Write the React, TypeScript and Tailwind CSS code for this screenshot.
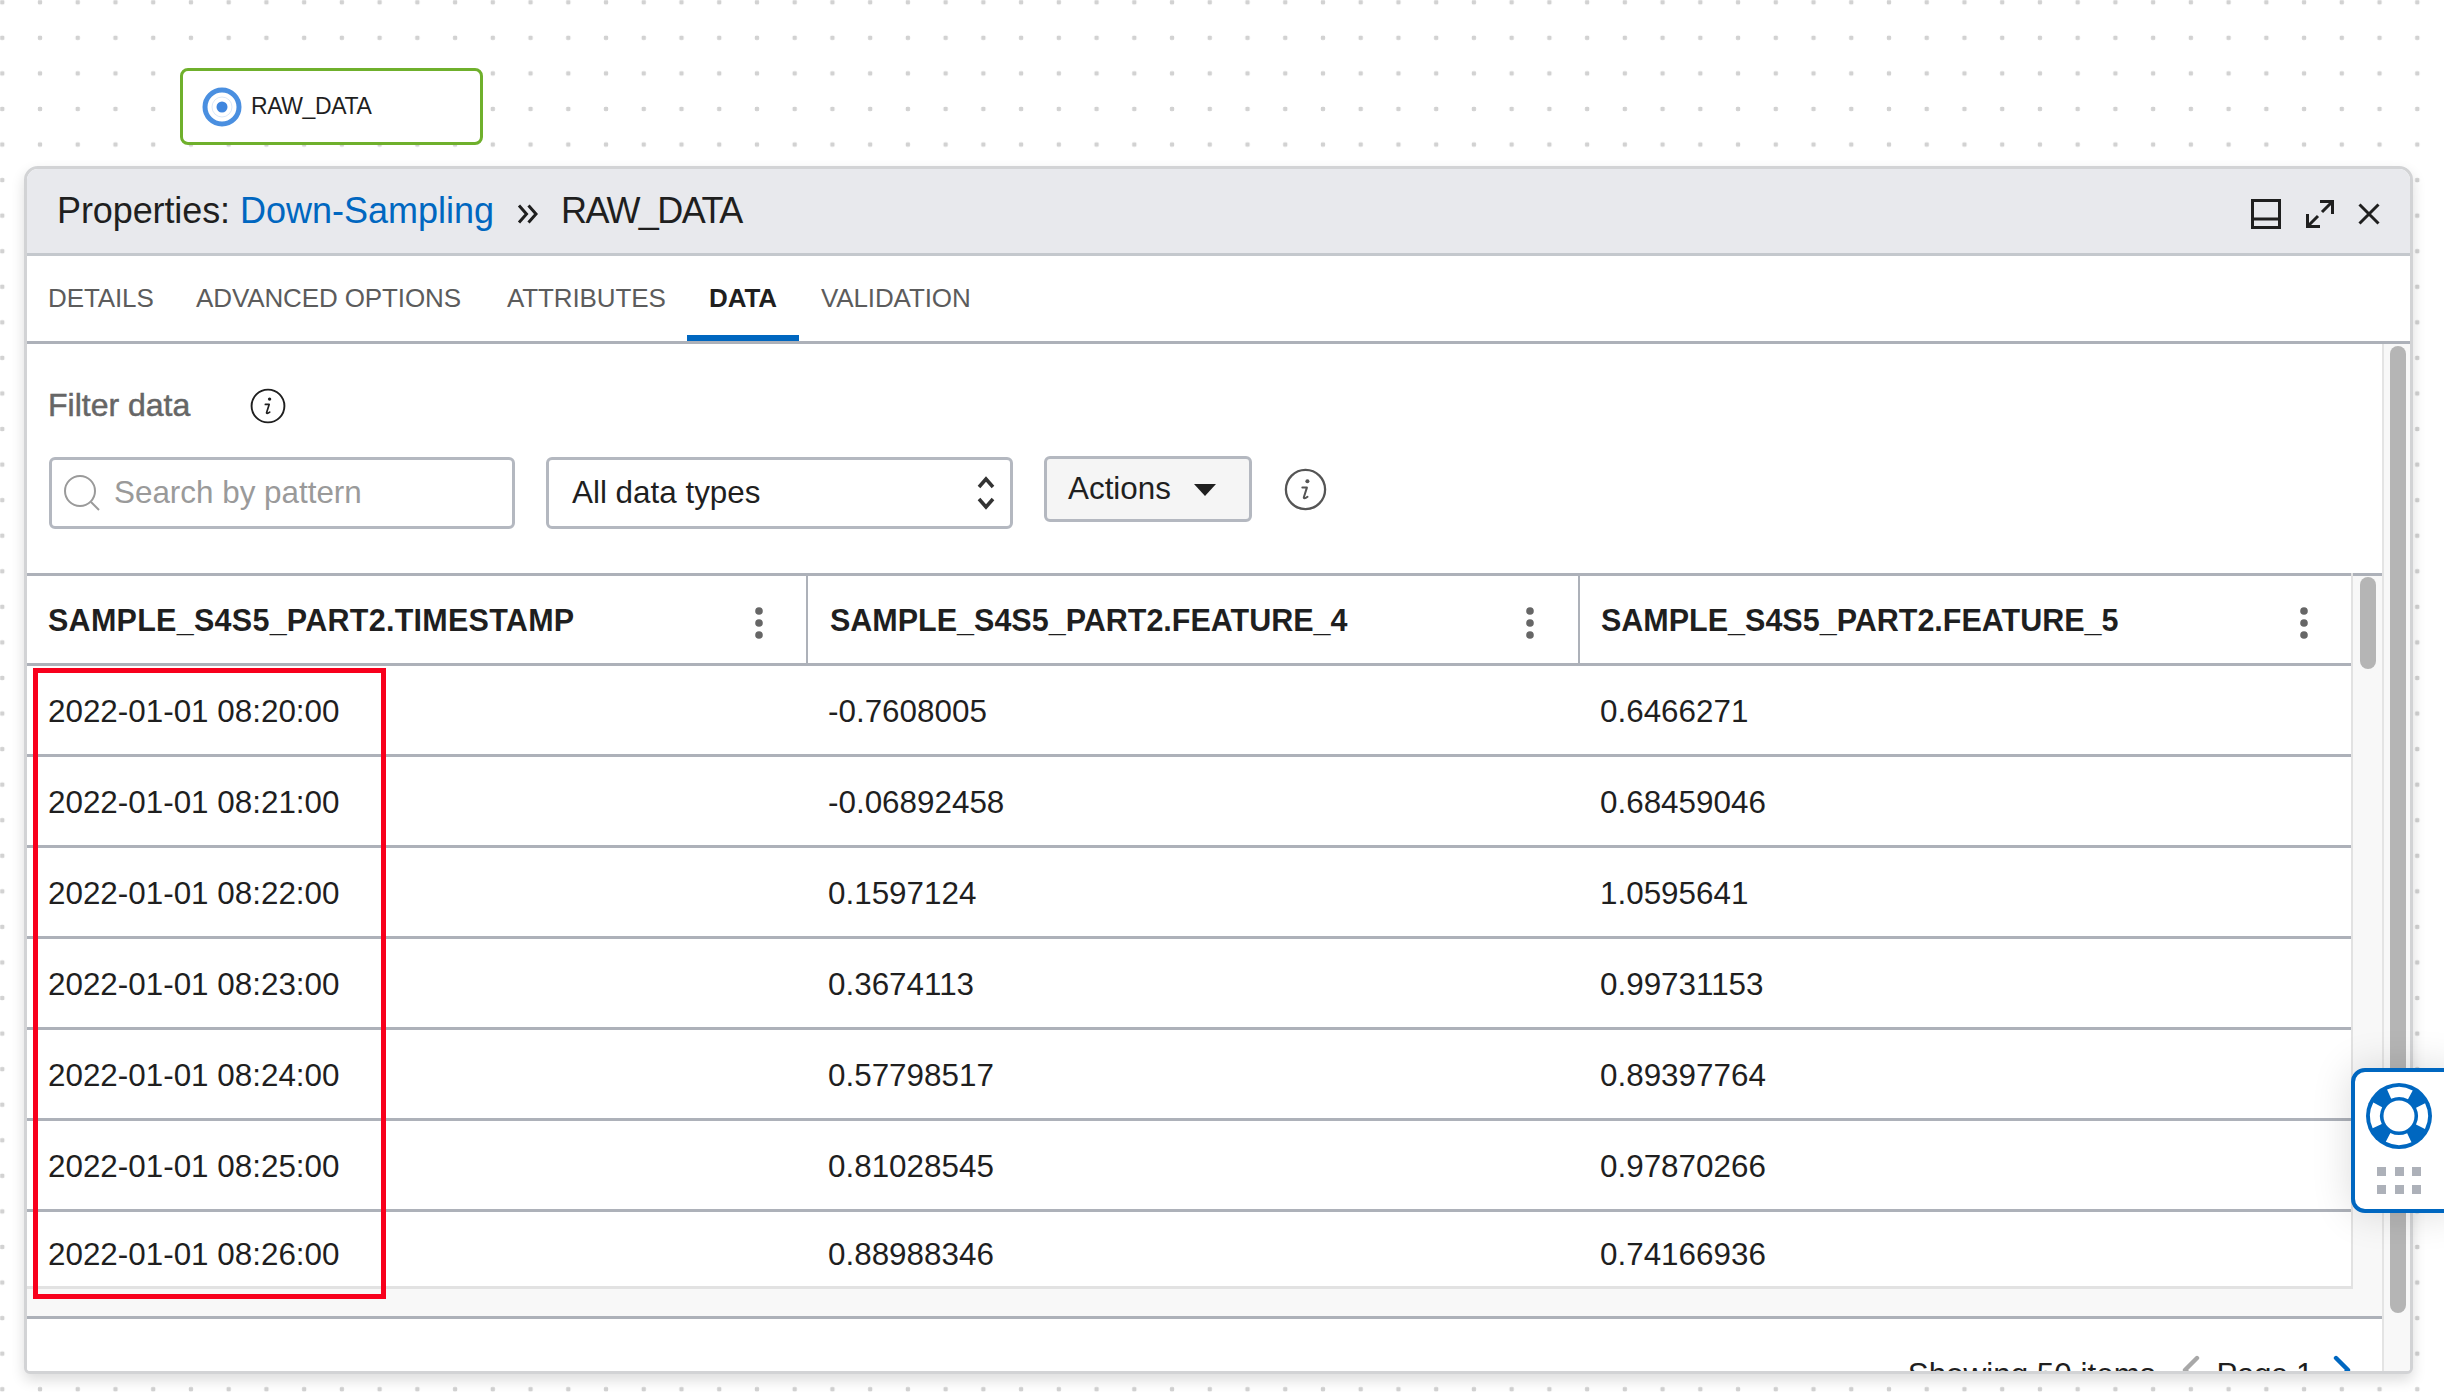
import { ChevronLeft, ChevronRight } from 'lucide-react';

const rows = [
  ['2022-01-01 08:20:00', '-0.7608005', '0.6466271'],
  ['2022-01-01 08:21:00', '-0.06892458', '0.68459046'],
  ['2022-01-01 08:22:00', '0.1597124', '1.0595641'],
  ['2022-01-01 08:23:00', '0.3674113', '0.99731153'],
  ['2022-01-01 08:24:00', '0.57798517', '0.89397764'],
  ['2022-01-01 08:25:00', '0.81028545', '0.97870266'],
  ['2022-01-01 08:26:00', '0.88988346', '0.74166936'],
];

const columns = [
  { name: 'SAMPLE_S4S5_PART2.TIMESTAMP', width: 'w-[781px]', cell: 'pl-[21px]', head: 'pl-[21px] pr-[42px] border-r-[2px] border-[#adb1b9] tracking-[0.27px]' },
  { name: 'SAMPLE_S4S5_PART2.FEATURE_4', width: 'w-[772px]', cell: 'pl-[20px]', head: 'pl-[22px] pr-[43px] border-r-[2px] border-[#adb1b9]' },
  { name: 'SAMPLE_S4S5_PART2.FEATURE_5', width: 'w-[771px]', cell: 'pl-[20px]', head: 'pl-[21px] pr-[42px]' },
];

function InfoIcon({ size, className }: { size: number; className?: string }) {
  return (
    <svg width={size} height={size} viewBox="0 0 34 34" className={className} fill="none">
      <circle cx="17" cy="17" r="15.5" stroke="currentColor" strokeWidth="1.8" />
      <circle cx="18.5" cy="10.5" r="1.6" fill="currentColor" />
      <path d="M14.5 15.5h3.6l-2.400 7.600c-.3 1 .8 1.400 2.900-.3" stroke="currentColor" strokeWidth="1.6" strokeLinecap="round" strokeLinejoin="round" />
    </svg>
  );
}

function Kebab() {
  return (
    <svg width="10" height="32" viewBox="0 0 10 32" className="mt-[7px] shrink-0 text-[#666666]" fill="currentColor">
      <circle cx="5" cy="4" r="3.800" />
      <circle cx="5" cy="16" r="3.800" />
      <circle cx="5" cy="28" r="3.800" />
    </svg>
  );
}

export default function App() {
  return (
    <div className="relative h-[1392px] w-[2444px] overflow-hidden bg-white bg-[radial-gradient(circle,#d2d2d2_2.2px,transparent_2.6px)] bg-[size:37.74px_35.57px] bg-[position:-16.6px_-15.5px] pt-[68px] font-['Liberation_Sans',Arial,sans-serif] text-[#1f1f1f]">
      {/* node */}
      <div className="ml-[180px] flex h-[77px] w-[303px] items-center rounded-[8px] border-[3px] border-[#6fb02c] bg-white pl-[19px]">
        <svg width="40" height="40" viewBox="0 0 40 40" fill="none">
          <circle cx="20" cy="20" r="17" stroke="#4a8fe0" strokeWidth="5" />
          <circle cx="20" cy="20" r="10" stroke="#dbe8f8" strokeWidth="1" />
          <circle cx="20" cy="20" r="5.500" fill="#3f86de" />
        </svg>
        <span className="ml-[9px] text-[23px] tracking-[-0.4px]">RAW_DATA</span>
      </div>

      {/* properties panel */}
      <div className="relative ml-[24px] mt-[21px] flex h-[1208px] w-[2389px] flex-col overflow-hidden rounded-t-[14px] rounded-b-[6px] border-[3px] border-[#d2d3d5] bg-white shadow-[0_6px_14px_rgba(0,0,0,0.14)]">
        <div className="flex h-[87px] shrink-0 items-center justify-between border-b-[3px] border-[#c4c8cd] bg-[#e8e9ed] pl-[30px] pr-[30px]">
          <div className="flex items-center text-[36px] leading-none">
            <span className="tracking-[-0.1px]">Properties:&nbsp;</span>
            <span className="text-[#0067c0]">Down-Sampling</span>
            <svg width="22" height="22" viewBox="0 0 22 22" fill="none" stroke="#1f1f1f" strokeWidth="3" className="ml-[23px] mr-[22px] mt-[6px]">
              <path d="M2 2.500l7.500 8.500L2 19.500M11.500 2.500l7.500 8.500-7.500 8.500" />
            </svg>
            <span className="tracking-[-1.6px]">RAW_DATA</span>
          </div>
          <div className="mt-[5px] flex items-center">
            <svg width="30" height="30" viewBox="0 0 30 30" fill="none" stroke="#1f1f1f" strokeWidth="3">
              <rect x="1.500" y="1.500" width="27" height="27" />
              <path d="M2 20h26" />
            </svg>
            <svg width="30" height="30" viewBox="0 0 30 30" fill="none" stroke="#1f1f1f" strokeWidth="3" className="ml-[24px]">
              <path d="M15 2.500h12.500V15M27 3L17 13M15 27.500H2.500V15M3 27l10-10" />
            </svg>
            <svg width="22" height="22" viewBox="0 0 22 22" fill="none" stroke="#1f1f1f" strokeWidth="3" className="ml-[23px]">
              <path d="M1.500 1.500l19 19M20.500 1.500l-19 19" />
            </svg>
          </div>
        </div>

        <div className="flex h-[88px] shrink-0 items-stretch border-b-[3px] border-[#adb1b9] pl-[21px] text-[26px] tracking-[-0.12px] text-[#5c5c5c]">
          <div className="flex w-[148px] items-center">DETAILS</div>
          <div className="flex w-[311px] items-center">ADVANCED OPTIONS</div>
          <div className="flex w-[180px] items-center">ATTRIBUTES</div>
          <div className="flex w-[112px] items-center justify-center border-b-[6px] border-[#0067c0] pt-[6px] font-bold text-[#1f1f1f]">DATA</div>
          <div className="flex items-center pl-[22px]">VALIDATION</div>
        </div>

        <div className="relative flex min-h-0 flex-1">
          <div className="flex min-w-0 flex-1 flex-col">
            <div className="flex h-[80px] shrink-0 items-center pl-[21px] pt-[44px]">
              <span className="-mt-[2px] text-[32px] leading-none text-[#666666] [-webkit-text-stroke:0.5px_#666666]">Filter data</span>
              <InfoIcon size={36} className="ml-[60px] text-[#1f1f1f]" />
            </div>
            <div className="mt-[33px] flex h-[71px] shrink-0 items-start pl-[22px] text-[31.400px]">
              <div className="flex h-[72px] w-[466px] items-center rounded-[6px] border-[3px] border-[#b4b8c0] bg-white pl-[10px] text-[#9a9a9a]">
                <svg width="40" height="40" viewBox="0 0 40 40" fill="none" stroke="#9a9a9a" strokeWidth="2">
                  <circle cx="18" cy="18" r="15" />
                  <path d="M29 29l8 8" />
                </svg>
                <span className="ml-[12px]">Search by pattern</span>
              </div>
              <div className="ml-[31px] flex h-[72px] w-[467px] items-center justify-between rounded-[6px] border-[3px] border-[#b4b8c0] bg-white pl-[23px] pr-[14px]">
                <span>All data types</span>
                <svg width="20" height="38" viewBox="0 0 20 38" fill="none" stroke="#333333" strokeWidth="3.500">
                  <path d="M3 13l7-8 7 8M3 25l7 8 7-8" />
                </svg>
              </div>
              <div className="-mt-px ml-[31px] flex h-[66px] w-[208px] items-center rounded-[6px] border-[3px] border-[#b4b8c0] bg-[#f5f5f5] pl-[21px]">
                <span>Actions</span>
                <svg width="22" height="12" viewBox="0 0 22 12" fill="#1f1f1f" className="ml-[23px] mt-px">
                  <path d="M0 0h22L11 12z" />
                </svg>
              </div>
              <InfoIcon size={43} className="ml-[32px] mt-[11px] text-[#555555]" />
            </div>

            <div className="mt-[45px] flex min-h-0 flex-1 flex-col bg-[#f8f8f8]">
              <div className="flex">
                <div className="w-[2326px] border-r-[2px] border-b-[3px] border-[#e2e2e2] bg-white">
                  <div className="flex h-[93px] border-y-[3px] border-[#adb1b9]">
                    {columns.map((col) => (
                      <div key={col.name} className={`${col.width} ${col.head} flex shrink-0 items-center justify-between text-[30.500px] font-bold`}>
                        <span className="mt-[2px]">{col.name}</span>
                        <Kebab />
                      </div>
                    ))}
                  </div>
                  {rows.map((row, r) => (
                    <div key={row[0]} className={`flex ${r === 6 ? 'h-[74px] pt-[12px]' : 'h-[91px] border-b-[3px] border-[#adb1b9] pt-[3px]'} text-[31.400px]`}>
                      {row.map((cell, c) => (
                        <div key={c} className={`${columns[c].width} ${columns[c].cell} flex shrink-0 items-center`}>
                          {cell}
                        </div>
                      ))}
                    </div>
                  ))}
                </div>
                {/* table scrollbar */}
                <div className="relative flex-1 border-t-[3px] border-[#adb1b9]">
                  <div className="absolute left-[7px] top-px h-[92px] w-[16px] rounded-full bg-[#b5b5b5]" />
                </div>
              </div>
            </div>

            <div className="flex h-[55px] shrink-0 items-start justify-end border-t-[3px] border-[#adb1b9] bg-white pr-[16px] pt-[40px] text-[31.400px] leading-none">
              <span>Showing 50 items</span>
              <ChevronLeft size={48} strokeWidth={2.2} className="-mt-[13px] ml-[11px] shrink-0 text-[#a8a8a8]" />
              <span className="ml-[2px] tracking-[-0.5px]">Page 1</span>
              <ChevronRight size={48} strokeWidth={2.2} className="-mt-[13px] ml-[5px] shrink-0 text-[#0067c0]" />
            </div>
          </div>

          {/* panel scrollbar */}
          <div className="relative w-[28px] shrink-0 border-l-[2px] border-[#e4e4e4] bg-[#f8f8f8]">
            <div className="absolute left-[6px] top-[2px] h-[967px] w-[16px] rounded-full bg-[#b5b5b5]" />
          </div>
        </div>
      </div>

      {/* red highlight */}
      <div className="absolute left-[33px] top-[668px] h-[631px] w-[353px] border-[5px] border-[#f8001c]" />

      {/* help widget */}
      <div className="absolute left-[2351px] top-[1068px] flex h-[145px] w-[110px] flex-col rounded-[14px] border-[4px] border-[#0067c0] bg-white pl-[11px] pt-[11px] shadow-[0_0_40px_rgba(0,0,0,0.14)]">
        <svg width="66" height="66" viewBox="0 0 66 66" className="shrink-0">
          <circle cx="33" cy="33" r="33" fill="#0067c0" />
          <circle cx="33" cy="33" r="24" fill="none" stroke="#ffffff" strokeWidth="10" strokeDasharray="21.800 15.900" transform="rotate(-26 33 33)" />
          <circle cx="33" cy="33" r="15.500" fill="#ffffff" />
        </svg>
        <div className="ml-[11px] mt-[18px] grid grid-cols-[9px_9px_9px] gap-x-[8.500px] gap-y-[9px]">
          {[0, 1, 2, 3, 4, 5].map((n) => (
            <div key={n} className="size-[9px] bg-[#adb1b9]" />
          ))}
        </div>
      </div>
    </div>
  );
}
